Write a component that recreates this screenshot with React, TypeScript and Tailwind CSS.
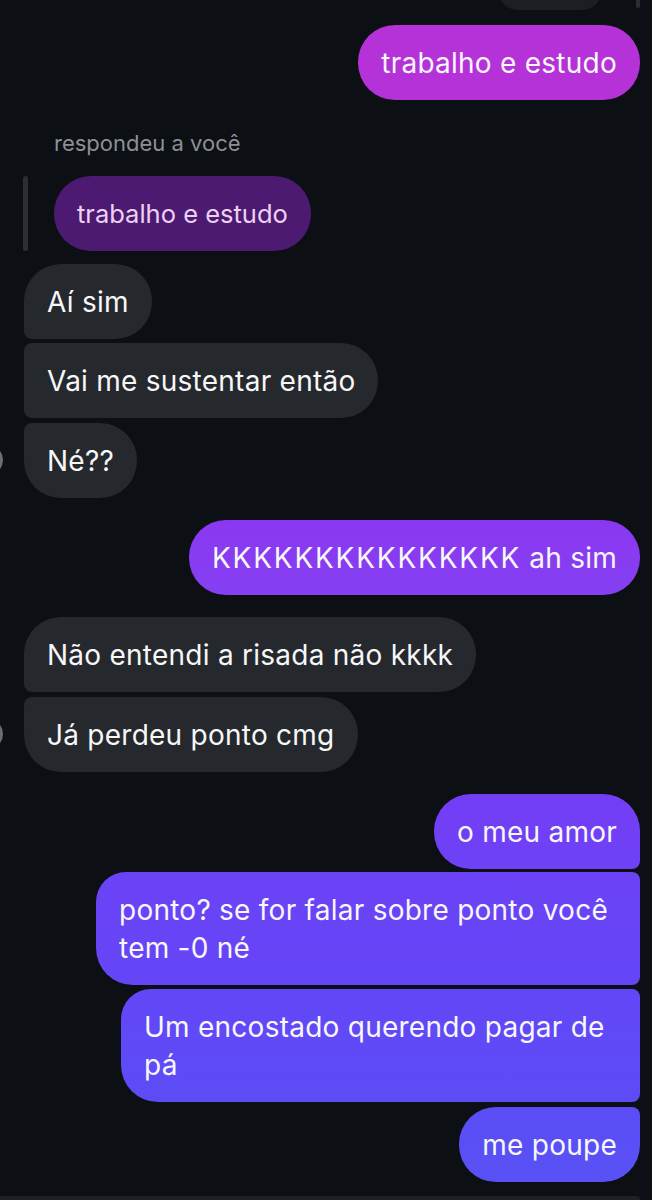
type Side = "in" | "out";

type Msg = {
  text: string;
  side: Side;
  corners: string;
  bg: string;
  avatar?: boolean;
  gapTop: string;
};

const messages: Msg[] = [
  { text: "Aí sim", side: "in", corners: "rounded-[37px] rounded-bl-[8px]", bg: "bg-[#25282d]", gapTop: "mt-[13px]" },
  { text: "Vai me sustentar então", side: "in", corners: "rounded-[37px] rounded-tl-[8px] rounded-bl-[8px]", bg: "bg-[#25282d]", gapTop: "mt-[4px]" },
  { text: "Né??", side: "in", corners: "rounded-[37px] rounded-tl-[8px]", bg: "bg-[#25282d]", avatar: true, gapTop: "mt-[5px]" },
  { text: "KKKKKKKKKKKKKKK ah sim", side: "out", corners: "rounded-[37px]", bg: "bg-gradient-to-b from-[#8b37f1] to-[#8540f3]", gapTop: "mt-[22px]" },
  { text: "Não entendi a risada não kkkk", side: "in", corners: "rounded-[37px] rounded-bl-[8px]", bg: "bg-[#25282d]", gapTop: "mt-[22px]" },
  { text: "Já perdeu ponto cmg", side: "in", corners: "rounded-[37px] rounded-tl-[8px]", bg: "bg-[#25282d]", avatar: true, gapTop: "mt-[5px]" },
  { text: "o meu amor", side: "out", corners: "rounded-[37px] rounded-br-[8px]", bg: "bg-gradient-to-b from-[#743df6] to-[#6d42f6]", gapTop: "mt-[22px]" },
  { text: "ponto? se for falar sobre ponto você tem -0 né", side: "out", corners: "rounded-[37px] rounded-tl-[30px] rounded-tr-[8px] rounded-br-[8px]", bg: "bg-gradient-to-b from-[#6c42f7] to-[#6446f7]", gapTop: "mt-[3px]" },
  { text: "Um encostado querendo pagar de pá", side: "out", corners: "rounded-[37px] rounded-tl-[30px] rounded-tr-[8px] rounded-br-[8px]", bg: "bg-gradient-to-b from-[#6347f7] to-[#5c4cf6]", gapTop: "mt-[4px]" },
  { text: "me poupe", side: "out", corners: "rounded-[37px] rounded-tr-[8px]", bg: "bg-gradient-to-b from-[#5b4df6] to-[#5851f5]", gapTop: "mt-[5px]" },
];

const widths: Record<string, string> = {
  "ponto? se for falar sobre ponto você tem -0 né": "w-[544px]",
  "Um encostado querendo pagar de pá": "w-[519px]",
};

function Bubble({ msg }: { msg: Msg }) {
  const isOut = msg.side === "out";
  // the laugh is a long run of capitals, which Inter sets tighter than the phone font
  const laugh = msg.text.startsWith("KKK");
  return (
    <div className={`flex ${isOut ? "justify-end pr-[12px]" : "justify-start pl-[24px]"} ${msg.gapTop}`}>
      {msg.avatar && (
        <div className="relative -ml-[24px] w-[24px] self-end">
          <div className="absolute -left-[29px] bottom-[22px] h-[32px] w-[32px] rounded-full bg-[#6b6d72]" />
        </div>
      )}
      <div
        className={`${msg.corners} ${msg.bg} ${widths[msg.text] ?? ""} px-[23px] py-[18.5px] text-[28px] leading-[38px] tracking-[0.25px] text-[#f7f7f8]`}
      >
        {laugh ? (
          <>
            <span className="tracking-[1.8px]">KKKKKKKKKKKKKKK</span> ah sim
          </>
        ) : (
          msg.text
        )}
      </div>
    </div>
  );
}

export default function App() {
  return (
    <div
      className="relative h-[1200px] w-[652px] overflow-hidden bg-[#0c0f13]"
      style={{ fontFamily: "Inter, 'Liberation Sans', sans-serif" }}
    >
      {/* cut-off bubble and scroll thumb at the very top */}
      <div className="flex h-[10px] justify-end gap-[34px] pr-[12px]">
        <div className="-mt-[30px] h-[40px] w-[104px] rounded-[20px] bg-[#1b1e23]" />
        <div className="h-[8px] w-[4px] rounded-b-full bg-[#2a2d31]" />
      </div>

      <div className="mt-[15px] flex justify-end pr-[12px]">
        <div className="rounded-[37px] bg-[#b531d8] px-[23px] py-[18.5px] text-[28px] leading-[38px] tracking-[0.25px] text-[#f7f7f8]">
          trabalho e estudo
        </div>
      </div>

      <div className="mt-[31px] pl-[54px] text-[22px] leading-[24px] text-[#8d9095]">respondeu a você</div>

      <div className="mt-[21px] flex items-stretch pl-[23px]">
        <div className="w-[5px] rounded-full bg-[#2b2e33]" />
        <div className="ml-[26px] rounded-[37px] bg-[#4d1a72] px-[23px] py-[20px] text-[25.5px] leading-[35px] text-[#ecd2f2]">
          trabalho e estudo
        </div>
      </div>

      {messages.map((m) => (
        <Bubble key={m.text} msg={m} />
      ))}

      <div className="absolute bottom-0 left-0 h-[4px] w-[640px] rounded-tr-[6px] bg-[#1d2025]" />
    </div>
  );
}
